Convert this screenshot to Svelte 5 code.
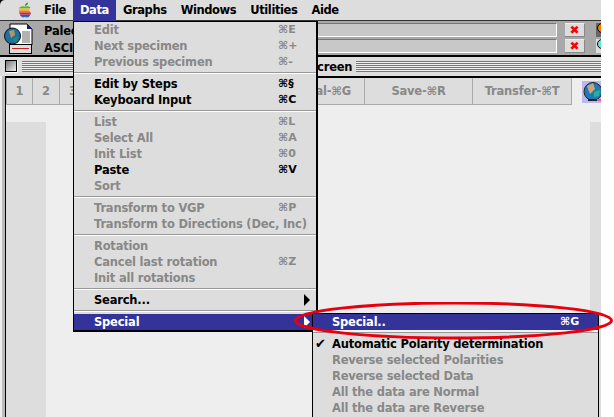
<script lang="ts">
	const menus = ['File', 'Data', 'Graphs', 'Windows', 'Utilities', 'Aide'];
	const sections = [
		[
			{ label: 'Edit', key: '⌘E' },
			{ label: 'Next specimen', key: '⌘+' },
			{ label: 'Previous specimen', key: '⌘-' }
		],
		[
			{ label: 'Edit by Steps', key: '⌘§', on: true },
			{ label: 'Keyboard Input', key: '⌘C', on: true }
		],
		[
			{ label: 'List', key: '⌘L' },
			{ label: 'Select All', key: '⌘A' },
			{ label: 'Init List', key: '⌘0' },
			{ label: 'Paste', key: '⌘V', on: true },
			{ label: 'Sort', key: '' }
		],
		[
			{ label: 'Transform to VGP', key: '⌘P' },
			{ label: 'Transform to Directions (Dec, Inc)', key: '' }
		],
		[
			{ label: 'Rotation', key: '' },
			{ label: 'Cancel last rotation', key: '⌘Z' },
			{ label: 'Init all rotations', key: '' }
		]
	];
	const subItems = [
		'Reverse selected Polarities',
		'Reverse selected Data',
		'All the data are Normal',
		'All the data are Reverse'
	];
</script>

<div class="screen">
	<div class="desk">
		<div class="bar-wrap">
			<header class="menubar">
				<svg class="apple" width="14" height="16" viewBox="0 0 14 16">
					<defs>
						<clipPath id="apple-shape">
							<path d="M1 6 Q3 3.6 7 4.6 Q10 3.6 12.5 5.4 L11 8 L13 11 Q11.5 15.5 9 15.5 L7 15 L5 15.5 Q1.5 14.5 1 9Z" />
						</clipPath>
					</defs>
					<path d="M7 4 Q7 1 10 0.5 Q10 3 7 4Z" fill="#2f8f35" />
					<g clip-path="url(#apple-shape)">
						<rect y="3" width="14" height="3.5" fill="#5cb03a" />
						<rect y="6.5" width="14" height="2" fill="#f4c41a" />
						<rect y="8.5" width="14" height="2" fill="#ee7d1b" />
						<rect y="10.5" width="14" height="2" fill="#d5242b" />
						<rect y="12.5" width="14" height="1.5" fill="#8a2f92" />
						<rect y="14" width="14" height="2" fill="#2a6cc0" />
					</g>
				</svg>
				{#each menus as m}
					<span class="menu-title" class:open={m === 'Data'}>{m}</span>
				{/each}
			</header>
		</div>

		<section class="info">
			<div class="doc-icon">
				<svg width="30" height="32" viewBox="0 0 30 32">
					<path d="M6 1 H23 L28 6 V22 H6Z" fill="#fff" stroke="#000" />
					<path d="M23 1 L28 6 H23Z" fill="#1a1a7a" />
					<path d="M18 9 H26 M18 11 H26 M18 13 H26 M18 15 H26 M18 17 H26 M18 19 H26" stroke="#666" />
					<circle cx="8.5" cy="13" r="8" fill="#1f6ea6" stroke="#111" />
					<path d="M5 8 L10 7 L11 12 L7 15Z" fill="#b8965a" />
					<path d="M9 16 L14 13 L13 18 L10 19Z" fill="#1f8e70" />
					<rect x="5.5" y="21.5" width="22" height="9" fill="#ddd" stroke="#000" />
					<rect x="8" y="25" width="17" height="1" fill="#c22" />
				</svg>
			</div>
			<div class="info-names">
				<span>Paleo</span>
				<span>ASCII</span>
			</div>
			<div class="fields">
				<div class="field-row"><div class="field"></div><span class="close">✖</span></div>
				<div class="field-row"><div class="field"></div><span class="close">✖</span></div>
			</div>
			<div class="lights">
				<span class="light orange"><i></i></span>
				<span class="light cyan"><i></i></span>
			</div>
		</section>

		<section class="titlebar">
			<span class="box"></span>
			<span class="stripes lead"></span>
			<span class="win-title">Screen</span>
			<span class="stripes"></span>
		</section>

		<div class="lower">
			<div class="frame">
				<nav class="toolbar">
					<span class="tab num">1</span>
					<span class="tab num">2</span>
					<span class="tab num">3</span>
					<span class="tab wide"></span>
					<span class="tab end">Special-⌘G</span>
					<span class="tab save">Save-⌘R</span>
					<span class="tab transfer">Transfer-⌘T</span>
					<span class="globe">
						<svg width="19" height="22" viewBox="0 0 19 22">
							<rect width="19" height="22" fill="#b9b9ee" />
							<circle cx="11" cy="10.5" r="9" fill="#1f78b8" stroke="#222" />
							<path d="M5 5 L11 2 L13 8 L8 13Z" fill="#c8a878" />
							<path d="M12 11 L18 9 L17 15 L12 16Z" fill="#2fae8a" />
							<rect x="6" y="18" width="9" height="2" fill="#222" />
							<rect x="15" y="18" width="4" height="2" fill="#ee55aa" />
						</svg>
					</span>
				</nav>

				<main class="content">
					<div class="left-col"></div>
					<div class="right-col"></div>
				</main>
			</div>
		</div>
	</div>

	<div class="menu">
		{#each sections as items}
			<div class="group">
				{#each items as item}
					<div class="row" class:on={item.on}>
						<span>{item.label}</span>
						{#if item.key}<span class="key">{item.key}</span>{/if}
					</div>
				{/each}
			</div>
		{/each}
		<div class="group">
			<div class="row on"><span>Search...</span><span class="arrow"></span></div>
		</div>
		<div class="group last">
			<div class="row sel"><span>Special</span><span class="arrow white"></span></div>
		</div>
	</div>

	<div class="submenu">
		<div class="sub-head">
			<div class="row sel"><span>Special..</span><span class="key">⌘G</span></div>
		</div>
		<div class="sub-list">
			<div class="row on"><span class="check">✔</span><span>Automatic Polarity determination</span></div>
			{#each subItems as s}
				<div class="row"><span>{s}</span></div>
			{/each}
		</div>
	</div>

	<svg class="ring" width="324" height="40" viewBox="0 0 324 40">
		<ellipse cx="160.5" cy="18.5" rx="158" ry="17.5" fill="none" stroke="#e8000f" stroke-width="3" />
	</svg>
</div>

<style>
	:global(body) {
		margin: 0;
		background: #fff;
	}
	.screen {
		position: relative;
		width: 614px;
		height: 417px;
		overflow: hidden;
		background: #fff;
		font-family: 'DejaVu Sans', sans-serif;
		font-size: 11.5px;
		letter-spacing: -0.2px;
		font-weight: 700;
		white-space: nowrap;
	}
	.desk {
		width: 601px;
		height: 417px;
		display: flex;
		flex-direction: column;
		background: #eee;
	}

	.bar-wrap {
		background: #000;
		flex-shrink: 0;
	}
	.menubar {
		height: 21px;
		display: flex;
		align-items: flex-start;
		padding-left: 18px;
		background: #ddd;
		border-radius: 5px 0 0 0;
		border-bottom: 1px solid #333;
		box-sizing: border-box;
	}
	.apple {
		margin: 2px 5px 0 0;
	}
	.menu-title {
		height: 21px;
		line-height: 21px;
		padding: 0 7px;
		color: #000;
		letter-spacing: -0.4px;
	}
	.menu-title.open {
		background: #333399;
		color: #fff;
	}

	.info {
		height: 36px;
		flex-shrink: 0;
		box-sizing: border-box;
		display: flex;
		background: #a8a8a8;
		border-bottom: 2px solid #000;
		padding: 2px 0 0 4px;
		overflow: hidden;
	}
	.doc-icon {
		width: 40px;
		height: 32px;
	}
	.info-names {
		display: flex;
		flex-direction: column;
		width: 41px;
		line-height: 17px;
		overflow: hidden;
	}
	.fields {
		flex: 1;
		display: flex;
		flex-direction: column;
		gap: 2px;
	}
	.field-row {
		display: flex;
		height: 14px;
	}
	.field {
		flex: 1;
		background: #c8c8c8;
		border-right: 1px solid #fff;
		border-bottom: 1px solid #fff;
		border-top: 1px solid #777;
		border-left: 1px solid #777;
	}
	.close {
		width: 20px;
		margin: 0 11px 0 8px;
		background: #ddd;
		color: #f00;
		font-size: 12px;
		line-height: 13px;
		text-align: center;
		border-right: 1px solid #888;
		border-bottom: 1px solid #888;
		border-top: 1px solid #eee;
		box-sizing: border-box;
		overflow: hidden;
	}
	.lights {
		width: 5px;
		display: flex;
		flex-direction: column;
		gap: 2px;
	}
	.light {
		height: 14px;
		background: #666;
		overflow: hidden;
	}
	.light.cyan {
		background: #ddd;
	}
	.light i {
		display: block;
		width: 10px;
		height: 10px;
		border-radius: 50%;
		border: 1px solid #000;
		margin: 0 0 0 1px;
		box-sizing: border-box;
	}
	.orange i {
		background: #f57a00;
	}
	.cyan i {
		background: #66eecc;
	}

	.titlebar {
		height: 19px;
		flex-shrink: 0;
		box-sizing: border-box;
		display: flex;
		align-items: flex-start;
		padding: 3px 0 0 5px;
		background: #ddd;
	}
	.box {
		width: 10px;
		height: 10px;
		background: linear-gradient(135deg, #777, #eee);
		border: 1px solid #000;
		box-shadow: 1px 1px 0 #fff;
		margin-right: 5px;
		flex-shrink: 0;
	}
	.stripes {
		flex: 1;
		height: 11px;
		margin-top: 1px;
		background: repeating-linear-gradient(#777 0 1px, #eee 1px 2px);
	}
	.stripes.lead {
		flex: none;
		width: 282px;
	}
	.win-title {
		width: 52px;
		line-height: 14px;
		padding-left: 5px;
		box-sizing: border-box;
		color: #000;
	}

	.lower {
		flex: 1;
		display: flex;
		margin-left: 2px;
		padding-left: 3px;
		background: #bbb;
		min-height: 0;
	}
	.frame {
		flex: 1;
		display: flex;
		flex-direction: column;
		border-left: 1px solid #000;
		border-top: 2px solid #000;
		background: #eee;
	}

	.toolbar {
		height: 27px;
		flex-shrink: 0;
		display: flex;
	}
	.tab {
		box-sizing: border-box;
		height: 27px;
		line-height: 27px;
		background: #ddd;
		border-right: 1px solid #aaa;
		border-bottom: 1px solid #aaa;
		color: #888;
		text-align: center;
	}
	.tab.num {
		width: 27px;
	}
	.tab.num:first-child {
		border-left: 1px solid #aaa;
	}
	.tab.wide {
		width: 173px;
	}
	.tab.end {
		width: 105px;
		text-align: right;
		padding-right: 13px;
	}
	.tab.save {
		width: 108px;
	}
	.tab.transfer {
		width: 99px;
	}
	.globe {
		flex: 1;
		padding: 3px 0 0 10px;
		overflow: hidden;
	}

	.content {
		flex: 1;
		display: flex;
		justify-content: space-between;
		padding-top: 17px;
	}
	.left-col {
		width: 40px;
		background: #ddd;
	}
	.right-col {
		width: 11px;
		background: #ddd;
	}

	.menu {
		position: absolute;
		left: 73px;
		top: 21px;
		width: 245px;
		background: #ddd;
		border: 1px solid #000;
		border-width: 1px 2px 2px 1px;
		box-sizing: border-box;
	}
	.group {
		padding: 2px 0;
		border-bottom: 1px solid #999;
		box-shadow: 0 1px 0 #fff;
		margin-bottom: 1px;
	}
	.group:first-child {
		padding-top: 0;
	}
	.group.last {
		border: 0;
		box-shadow: none;
		margin: 0;
		padding: 2px 0 0;
	}
	.row {
		display: flex;
		height: 16px;
		line-height: 16px;
		padding: 0 18px 0 20px;
		justify-content: space-between;
		align-items: center;
		color: #888;
	}
	.row.on {
		color: #000;
	}
	.row.sel {
		background: #333399;
		color: #fff;
	}
	.key {
		width: 20px;
		font-size: 11px;
		letter-spacing: 0;
	}
	.arrow {
		width: 0;
		height: 0;
		border-left: 6px solid #000;
		border-top: 6px solid transparent;
		border-bottom: 6px solid transparent;
		margin-right: -12px;
	}
	.arrow.white {
		border-left-color: #fff;
	}

	.submenu {
		position: absolute;
		left: 312px;
		top: 313px;
		width: 287px;
		height: 110px;
		background: #ddd;
		border: 1px solid #000;
		border-bottom: 0;
		box-sizing: border-box;
	}
	.submenu .row {
		padding-left: 19px;
		position: relative;
	}
	.sub-head {
		padding-bottom: 2px;
		background: #f4f4f4;
		border-bottom: 1px solid #999;
	}
	.sub-list {
		padding-top: 3px;
	}
	.submenu .row:not(.sel) {
		justify-content: flex-start;
	}
	.check {
		position: absolute;
		left: 2px;
		font-size: 13px;
	}
	.ring {
		position: absolute;
		left: 293px;
		top: 302px;
		pointer-events: none;
	}
</style>
